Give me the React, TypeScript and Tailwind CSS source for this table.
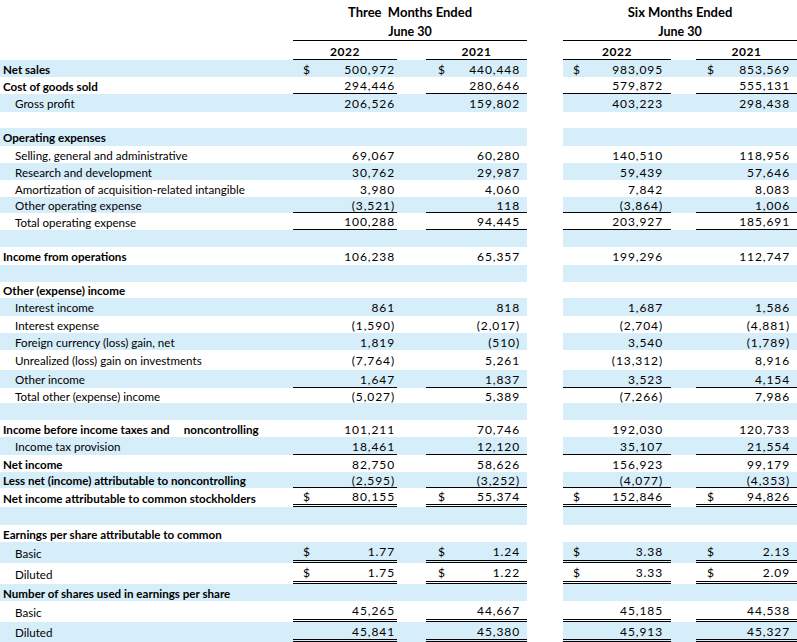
import React from "react";

type Row = {
  l?: string;
  b?: boolean;
  i?: boolean;
  v?: string[];
  d?: boolean;
  u?: "s" | "d";
  h: number;
  gap?: boolean;
};

const rows: Row[] = [
  { l: "Net sales", b: true, v: ["500,972", "440,448", "983,095", "853,569"], d: true, h: 17 },
  { l: "Cost of goods sold", b: true, v: ["294,446", "280,646", "579,872", "555,131"], u: "s", h: 17 },
  { l: "Gross profit", i: true, v: ["206,526", "159,802", "403,223", "298,438"], h: 18 },
  { h: 16 },
  { l: "Operating expenses", b: true, h: 18 },
  { l: "Selling, general and administrative", i: true, v: ["69,067", "60,280", "140,510", "118,956"], h: 17 },
  { l: "Research and development", i: true, v: ["30,762", "29,987", "59,439", "57,646"], h: 17 },
  { l: "Amortization of acquisition-related intangible", i: true, v: ["3,980", "4,060", "7,842", "8,083"], h: 17 },
  { l: "Other operating expense", i: true, v: ["(3,521)", "118", "(3,864)", "1,006"], u: "s", h: 16 },
  { l: "Total operating expense", i: true, v: ["100,288", "94,445", "203,927", "185,691"], u: "s", h: 17 },
  { h: 17 },
  { l: "Income from operations", b: true, v: ["106,238", "65,357", "199,296", "112,747"], h: 18 },
  { h: 17 },
  { l: "Other (expense) income", b: true, h: 16 },
  { l: "Interest income", i: true, v: ["861", "818", "1,687", "1,586"], h: 18 },
  { l: "Interest expense", i: true, v: ["(1,590)", "(2,017)", "(2,704)", "(4,881)"], h: 17 },
  { l: "Foreign currency (loss) gain, net", i: true, v: ["1,819", "(510)", "3,540", "(1,789)"], h: 17 },
  { l: "Unrealized (loss) gain on investments", i: true, v: ["(7,764)", "5,261", "(13,312)", "8,916"], h: 20 },
  { l: "Other income", i: true, v: ["1,647", "1,837", "3,523", "4,154"], u: "s", h: 18 },
  { l: "Total other (expense) income", i: true, v: ["(5,027)", "5,389", "(7,266)", "7,986"], h: 15 },
  { h: 17 },
  { l: "Income before income taxes and", gap: true, b: true, v: ["101,211", "70,746", "192,030", "120,733"], h: 17 },
  { l: "Income tax provision", i: true, v: ["18,461", "12,120", "35,107", "21,554"], u: "s", h: 18 },
  { l: "Net income", b: true, v: ["82,750", "58,626", "156,923", "99,179"], h: 17 },
  { l: "Less net (income) attributable to noncontrolling", b: true, v: ["(2,595)", "(3,252)", "(4,077)", "(4,353)"], u: "s", h: 16 },
  { l: "Net income attributable to common stockholders", b: true, v: ["80,155", "55,374", "152,846", "94,826"], d: true, u: "d", h: 19 },
  { h: 18 },
  { l: "Earnings per share attributable to common", b: true, h: 17 },
  { l: "Basic", i: true, v: ["1.77", "1.24", "3.38", "2.13"], d: true, u: "d", h: 21 },
  { l: "Diluted", i: true, v: ["1.75", "1.22", "3.33", "2.09"], d: true, u: "d", h: 21 },
  { l: "Number of shares used in earnings per share", b: true, h: 17 },
  { l: "Basic", i: true, v: ["45,265", "44,667", "45,185", "44,538"], u: "d", h: 21 },
  { l: "Diluted", i: true, v: ["45,841", "45,380", "45,913", "45,327"], u: "d", h: 20 },
];

const colCls = [
  "w-[104px] pl-[10px] pr-[2px]",
  "w-[101px] pl-[12px] pr-[7px]",
  "w-[108px] pl-[10px] pr-[8px]",
  "w-[101px] pl-[11px] pr-[7px]",
];

function Cell({ r, k }: { r: Row; k: number }) {
  const border =
    r.u === "s"
      ? "border-b border-black"
      : r.u === "d"
      ? "border-b-[3px] border-double border-black"
      : "";
  return (
    <div className={`${colCls[k]} h-full pt-[2px] flex items-center justify-between shrink-0 ${border}`}>
      <span className="text-[12px]">{r.d ? "$" : ""}</span>
      <span className="text-[12px] tracking-[0.9px]">{r.v ? r.v[k] : ""}</span>
    </div>
  );
}

function BodyRow({ r, idx }: { r: Row; idx: number }) {
  const blue = idx % 2 === 0 ? "bg-[#d6eef9]" : "bg-white";
  return (
    <div className="flex w-[797px]" style={{ height: r.h }}>
      <div className={`flex w-[527px] h-full ${blue}`}>
        <div
          className={`w-[293px] h-full pt-[2px] flex items-center shrink-0 whitespace-pre text-[11.6px] ${
            r.b ? "font-bold pl-[3px]" : "pl-[15px]"
          }`}
        >
          {r.l}
          {r.gap ? (
            <>
              <span className="inline-block w-[14px]" />
              noncontrolling
            </>
          ) : null}
        </div>
        <Cell r={r} k={0} />
        <div className="w-[29px] shrink-0" />
        <Cell r={r} k={1} />
      </div>
      <div className="w-[36px] shrink-0 bg-white" />
      <div className={`flex w-[234px] h-full ${blue}`}>
        <Cell r={r} k={2} />
        <div className="w-[25px] shrink-0" />
        <Cell r={r} k={3} />
      </div>
    </div>
  );
}

export default function App() {
  return (
    <div className="w-[797px] h-[642px] bg-white text-black font-['Lato',sans-serif] overflow-hidden">
      {/* Header */}
      <div className="flex h-[22px]">
        <div className="w-[293px] shrink-0" />
        <div className="w-[234px] shrink-0 pt-[4px] flex items-center justify-center font-bold text-[13px]">
          Three&nbsp; Months Ended
        </div>
        <div className="w-[36px] shrink-0" />
        <div className="w-[234px] shrink-0 pt-[4px] flex items-center justify-center font-bold text-[13px]">
          Six Months Ended
        </div>
      </div>
      <div className="flex h-[19px]">
        <div className="w-[293px] shrink-0" />
        <div className="w-[234px] shrink-0 pt-[2px] flex items-center justify-center font-bold text-[12.5px] border-b border-black">
          June 30
        </div>
        <div className="w-[36px] shrink-0" />
        <div className="w-[234px] shrink-0 pt-[2px] flex items-center justify-center font-bold text-[12.5px] border-b border-black">
          June 30
        </div>
      </div>
      <div className="flex h-[19px]">
        <div className="w-[293px] shrink-0" />
        <div className="w-[104px] shrink-0 pt-[3px] flex items-center justify-center font-bold text-[12px] tracking-[0.5px] border-b border-black">
          2022
        </div>
        <div className="w-[29px] shrink-0" />
        <div className="w-[101px] shrink-0 pt-[3px] flex items-center justify-center font-bold text-[12px] tracking-[0.5px] border-b border-black">
          2021
        </div>
        <div className="w-[36px] shrink-0" />
        <div className="w-[108px] shrink-0 pt-[3px] flex items-center justify-center font-bold text-[12px] tracking-[0.5px] border-b border-black">
          2022
        </div>
        <div className="w-[25px] shrink-0" />
        <div className="w-[101px] shrink-0 pt-[3px] flex items-center justify-center font-bold text-[12px] tracking-[0.5px] border-b border-black">
          2021
        </div>
      </div>
      {rows.map((r, idx) => (
        <BodyRow key={idx} r={r} idx={idx} />
      ))}
    </div>
  );
}
